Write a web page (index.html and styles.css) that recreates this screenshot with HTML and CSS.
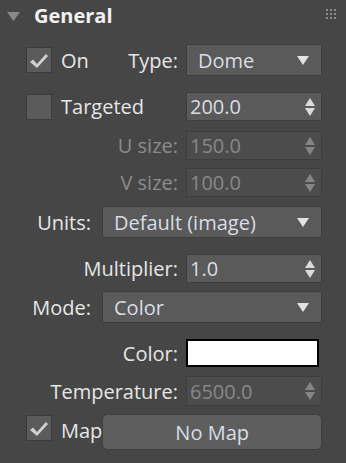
FILE: index.html
```html
<!DOCTYPE html>
<html>
<head>
<meta charset="utf-8">
<link rel="stylesheet" href="styles.css">
</head>
<body>
<div class="panel">
  <div class="header">
    <svg class="tri" width="13" height="9" viewBox="0 0 13 9"><path d="M0 0H13L6.5 9Z" fill="#8a8a8a"/></svg>
    <span class="title">General</span>
    <svg class="grip" width="10" height="10" viewBox="0 0 10 10" fill="#8c8c8c">
      <rect x="0" y="0" width="2" height="2"/><rect x="4" y="0" width="2" height="2"/><rect x="8" y="0" width="2" height="2"/>
      <rect x="0" y="4" width="2" height="2"/><rect x="4" y="4" width="2" height="2"/><rect x="8" y="4" width="2" height="2"/>
      <rect x="0" y="8" width="2" height="2"/><rect x="4" y="8" width="2" height="2"/><rect x="8" y="8" width="2" height="2"/>
    </svg>
  </div>
  <div class="body">
    <div class="row r-on">
      <div class="left">
        <span class="cb"><svg width="20" height="18" viewBox="0 0 20 18"><path d="M1 10L4 7.5L8 12L17 2L19 4L8 16Z" fill="#d0d0d0"/></svg></span>
        <span class="cbl">On</span>
        <span class="lab">Type:</span>
      </div>
      <div class="dd"><span>Dome</span><i class="arr"></i></div>
    </div>
    <div class="row r-tg">
      <div class="left">
        <span class="cb"></span>
        <span class="cbl">Targeted</span>
      </div>
      <div class="sp"><span>200.0</span><i class="spa"></i></div>
    </div>
    <div class="row r-u">
      <div class="left"><span class="lab dis">U size:</span></div>
      <div class="sp dis"><span>150.0</span><i class="spa"></i></div>
    </div>
    <div class="row r-v">
      <div class="left"><span class="lab dis">V size:</span></div>
      <div class="sp dis"><span>100.0</span><i class="spa"></i></div>
    </div>
    <div class="row wide r-units">
      <span class="lab">Units:</span>
      <div class="dd"><span>Default (image)</span><i class="arr"></i></div>
    </div>
    <div class="row r-mult">
      <div class="left"><span class="lab">Multiplier:</span></div>
      <div class="sp"><span>1.0</span><i class="spa"></i></div>
    </div>
    <div class="row wide r-mode">
      <span class="lab">Mode:</span>
      <div class="dd"><span>Color</span><i class="arr"></i></div>
    </div>
    <div class="row r-color">
      <div class="left"><span class="lab">Color:</span></div>
      <div class="swatch"></div>
    </div>
    <div class="row r-temp">
      <div class="left"><span class="lab">Temperature:</span></div>
      <div class="sp dis"><span>6500.0</span><i class="spa"></i></div>
    </div>
    <div class="row r-map">
      <span class="cb"><svg width="20" height="18" viewBox="0 0 20 18"><path d="M1 10L4 7.5L8 12L17 2L19 4L8 16Z" fill="#d0d0d0"/></svg></span>
      <span class="cbl">Map</span>
      <div class="btn">No Map</div>
    </div>
  </div>
</div>
</body>
</html>
```

FILE: styles.css
```css
html, body {
  margin: 0;
  padding: 0;
  background: #464646;
}
.panel {
  width: 346px;
  height: 463px;
  font-family: "Open Sans", "Noto Sans", sans-serif;
  color: #e6e6e6;
  font-size: 20px;
}
.header {
  display: flex;
  align-items: center;
  height: 32px;
  padding: 0 10px 0 7px;
}
.title {
  font-weight: bold;
  font-size: 20px;
  margin-left: 14px;
  color: #f2f2f2;
  flex: 1;
  margin-top: -1px;
}
.grip { margin-top: -4px; }
.body {
  padding: 12px 24px 0 26px;
  display: flex;
  flex-direction: column;
}
.row {
  display: flex;
  align-items: center;
}
.left {
  width: 152px;
  display: flex;
  align-items: center;
  justify-content: flex-end;
  margin-right: 8px;
  flex: none;
}
.left .cb + .cbl { margin-right: auto; }
.cb {
  width: 24px;
  height: 24px;
  background: #5b5b5b;
  border: 1px solid #3c3c3c;
  display: flex;
  align-items: center;
  justify-content: center;
  flex: none;
  box-sizing: content-box;
}
.cb svg { margin-top: 1px; }
.cbl { margin-left: 9px; }
.lab { white-space: nowrap; }
.dis { color: #8c8c8c; }
.dd, .sp {
  box-sizing: border-box;
  background: #5a5a5a;
  border: 1px solid #3e3e3e;
  display: flex;
  align-items: center;
  justify-content: space-between;
  color: #d9dde4;
  width: 136px;
  white-space: nowrap;
}
.dd { height: 32px; padding: 0 12px 0 11px; }
.sp { height: 29px; padding: 0 5px 0 3px; }
.sp.dis { background: #4c4c4c; color: #888; }
.arr {
  width: 0; height: 0;
  border-left: 6.5px solid transparent;
  border-right: 6.5px solid transparent;
  border-top: 9px solid #e2e2e2;
}
.spa {
  width: 11px;
  height: 18px;
  position: relative;
}
.spa::before, .spa::after {
  content: "";
  position: absolute;
  left: 0;
  border-left: 5.5px solid transparent;
  border-right: 5.5px solid transparent;
}
.spa::before { top: 0; border-bottom: 8px solid #dcdcdc; }
.spa::after { bottom: 0; border-top: 8px solid #dcdcdc; }
.sp.dis .spa::before { border-bottom-color: #858585; }
.sp.dis .spa::after { border-top-color: #858585; }

.wide .lab { width: 65px; text-align: right; margin-right: 11px; }
.wide .dd { width: 220px; }

.swatch {
  width: 133px;
  height: 28px;
  box-sizing: border-box;
  background: #fff;
  border: 2px solid #000;
}
.btn {
  margin-left: auto;
  width: 220px;
  height: 36px;
  box-sizing: border-box;
  background: #5e5e5e;
  border: 1px solid #3e3e3e;
  border-radius: 5px;
  display: flex;
  align-items: center;
  justify-content: center;
  color: #d9dde4;
}
.r-map { align-items: flex-start; }
.r-map .cb { margin-top: 1px; }
.r-map .cbl { margin-left: 9px; margin-top: 3px; }

.r-on { height: 32px; }
.r-tg { margin-top: 16px; }
.r-u { margin-top: 10px; }
.r-v { margin-top: 8px; }
.r-units { margin-top: 9px; }
.r-mult { margin-top: 16px; }
.r-mode { margin-top: 8px; }
.r-color { margin-top: 16px; }
.r-temp { margin-top: 9px; }
.r-temp .sp { height: 30px; }
.r-map { margin-top: 8px; }
```
